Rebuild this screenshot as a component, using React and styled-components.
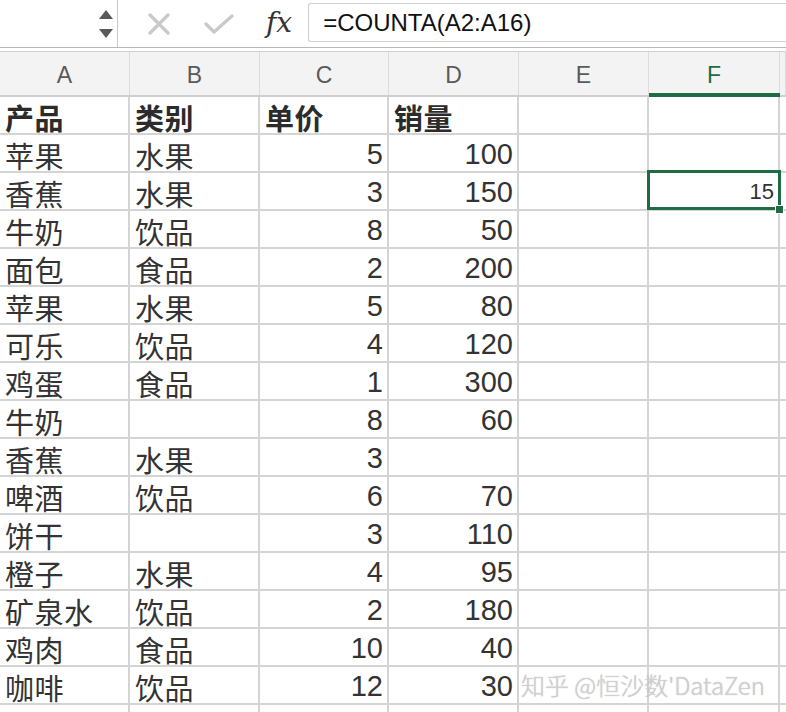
import React from "react";
import styled, { createGlobalStyle } from "styled-components";

const GlobalStyle = createGlobalStyle`
  html, body {
    margin: 0;
    padding: 0;
    background: #ffffff;
    overflow: hidden;
  }
  * {
    box-sizing: border-box;
  }
`;

const COLS = [130, 130, 129, 130, 130, 131];
const LETTERS = ["A", "B", "C", "D", "E", "F"];

const ROWS = [
  ["产品", "类别", "单价", "销量"],
  ["苹果", "水果", 5, 100],
  ["香蕉", "水果", 3, 150],
  ["牛奶", "饮品", 8, 50],
  ["面包", "食品", 2, 200],
  ["苹果", "水果", 5, 80],
  ["可乐", "饮品", 4, 120],
  ["鸡蛋", "食品", 1, 300],
  ["牛奶", "", 8, 60],
  ["香蕉", "水果", 3, ""],
  ["啤酒", "饮品", 6, 70],
  ["饼干", "", 3, 110],
  ["橙子", "水果", 4, 95],
  ["矿泉水", "饮品", 2, 180],
  ["鸡肉", "食品", 10, 40],
  ["咖啡", "饮品", 12, 30],
  ["", "", "", ""],
];

const Page = styled.div`
  position: relative;
  width: 786px;
  height: 712px;
  overflow: hidden;
  font-family: "Liberation Sans", "Noto Sans CJK SC", sans-serif;
`;

const FormulaBar = styled.div`
  display: flex;
  align-items: center;
  height: 48px;
  border-bottom: 1px solid #b9b9b9;
`;

const NameBox = styled.div`
  width: 118px;
  height: 47px;
  border-right: 1px solid #c9c9c9;
  display: flex;
  flex-direction: column;
  align-items: flex-end;
  justify-content: center;
  gap: 10px;
  padding-right: 4px;
`;

const Arrow = styled.div`
  width: 0;
  height: 0;
  border-left: 7px solid transparent;
  border-right: 7px solid transparent;
  ${(p) =>
    p.$up
      ? "border-bottom: 9px solid #5a5a5a;"
      : "border-top: 9px solid #5a5a5a;"}
`;

const Tools = styled.div`
  display: flex;
  align-items: center;
  height: 100%;
  padding-left: 30px;
  gap: 34px;
`;

const Fx = styled.span`
  font-family: "DejaVu Serif", "Liberation Serif", serif;
  font-style: italic;
  font-size: 28px;
  color: #333;
  margin-left: -2px;
  margin-top: -2px;
`;

const FormulaInput = styled.div`
  margin-left: 16px;
  flex: 1;
  height: 39px;
  margin-top: -2px;
  border: 1px solid #cfcfcf;
  border-right: none;
  border-radius: 3px 0 0 3px;
  display: flex;
  align-items: center;
  padding-left: 14px;
  font-size: 24px;
  color: #111;
`;

const Sheet = styled.div`
  margin-top: 3px;
  border-top: 1px solid #d3d3d3;
`;

const HeaderRow = styled.div`
  display: flex;
  height: 45px;
  background: #f3f3f3;
  border-bottom: 2px solid #cfcfcf;
`;

const ColHead = styled.div`
  flex: ${(p) => (p.$w ? `0 0 ${p.$w}px` : "1")};
  display: flex;
  align-items: center;
  justify-content: center;
  font-size: 23px;
  color: ${(p) => (p.$active ? "#1f6b43" : "#5a5a5a")};
  border-right: 1px solid #dcdcdc;
  position: relative;
  padding-top: 3px;
  ${(p) =>
    p.$active &&
    `
    &::after {
      content: "";
      position: absolute;
      left: 0;
      right: -1px;
      bottom: -2px;
      height: 4px;
      background: #1f6b43;
    }
  `}
`;

const Row = styled.div`
  display: flex;
  height: 38px;
`;

const Cell = styled.div`
  flex: ${(p) => (p.$w ? `0 0 ${p.$w}px` : "1")};
  border-right: 2px solid #d4d4d4;
  border-bottom: 2px solid #d4d4d4;
  display: flex;
  align-items: center;
  justify-content: ${(p) => (p.$num ? "flex-end" : "flex-start")};
  padding: ${(p) => (p.$num ? "2px 4px 0 5px" : "3px 4px 0 5px")};
  font-family: ${(p) =>
    p.$num
      ? `"Liberation Sans", "Noto Sans CJK SC", sans-serif`
      : `"Noto Sans CJK SC", "Liberation Sans", sans-serif`};
  font-size: ${(p) => (p.$small ? "22px" : "29px")};
  font-weight: ${(p) => (p.$bold ? 700 : 400)};
  color: ${(p) => (p.$bold ? "#2b2b2b" : "#333")};
  position: relative;
  white-space: nowrap;
  letter-spacing: ${(p) => (p.$num ? "0" : "0.5px")};
`;

const Selection = styled.div`
  position: absolute;
  z-index: 2;
  top: -3px;
  left: -2px;
  right: -3px;
  bottom: -1px;
  border: 3px solid #1f6b43;
  pointer-events: none;
`;

const Handle = styled.div`
  position: absolute;
  right: -6px;
  bottom: -7px;
  width: 9px;
  height: 9px;
  background: #1f6b43;
  border: 1px solid #ffffff;
`;

const Watermark = styled.div`
  position: absolute;
  z-index: 3;
  left: 521px;
  top: 667px;
  font-family: "Noto Sans CJK SC", "Liberation Sans", sans-serif;
  font-size: 24px;
  font-weight: 300;
  color: rgba(210, 210, 210, 0.95);
  text-shadow: 0 0 1px rgba(110, 110, 110, 0.5);
  white-space: nowrap;
  pointer-events: none;
`;

const CrossIcon = () => (
  <svg width="22" height="22" viewBox="0 0 22 22">
    <path
      d="M2 2 L20 20 M20 2 L2 20"
      stroke="#c9c9c9"
      strokeWidth="3.2"
      strokeLinecap="round"
    />
  </svg>
);

const CheckIcon = () => (
  <svg width="30" height="22" viewBox="0 0 30 22">
    <path
      d="M2 11 L10 19 L28 3"
      stroke="#c9c9c9"
      strokeWidth="3.2"
      fill="none"
      strokeLinecap="round"
      strokeLinejoin="round"
    />
  </svg>
);

const App = () => {
  return (
    <Page>
      <GlobalStyle />
      <FormulaBar>
        <NameBox>
          <Arrow $up />
          <Arrow />
        </NameBox>
        <Tools>
          <CrossIcon />
          <CheckIcon />
          <Fx>fx</Fx>
        </Tools>
        <FormulaInput>=COUNTA(A2:A16)</FormulaInput>
      </FormulaBar>
      <Sheet>
        <HeaderRow>
          {LETTERS.map((l, i) => (
            <ColHead key={l} $w={COLS[i]} $active={l === "F"}>
              {l}
            </ColHead>
          ))}
          <ColHead />
        </HeaderRow>
        {ROWS.map((r, ri) => (
          <Row key={ri}>
            {COLS.map((w, ci) => {
              const v = ci < 4 ? r[ci] : "";
              const isNum = typeof v === "number";
              const selected = ri === 2 && ci === 5;
              return (
                <Cell
                  key={ci}
                  $w={w}
                  $num={isNum || selected}
                  $bold={ri === 0}
                  $small={selected}
                >
                  {selected ? "15" : v}
                  {selected && (
                    <Selection>
                      <Handle />
                    </Selection>
                  )}
                </Cell>
              );
            })}
            <Cell />
          </Row>
        ))}
      </Sheet>
      <Watermark>知乎 @恒沙数'DataZen</Watermark>
    </Page>
  );
};

export default App;
